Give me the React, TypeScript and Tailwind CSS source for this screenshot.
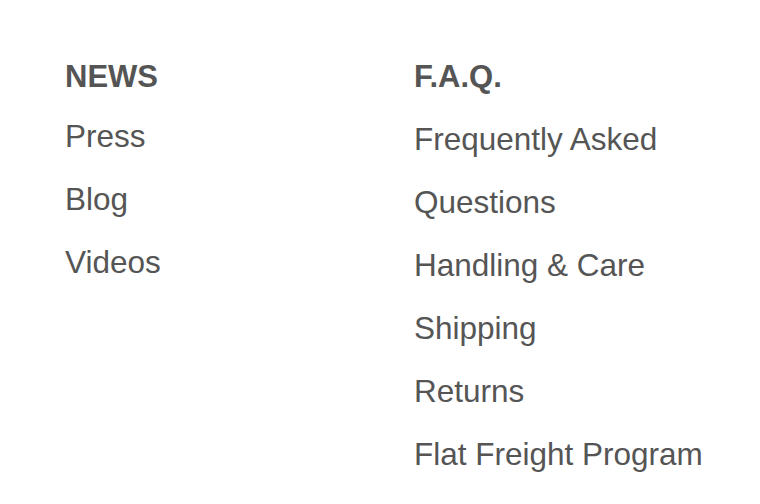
const news = ["Press", "Blog", "Videos"];
const faq = [
  "Frequently Asked",
  "Questions",
  "Handling & Care",
  "Shipping",
  "Returns",
  "Flat Freight Program",
];

function Column({
  title,
  items,
  className,
  listClass,
}: {
  title: string;
  items: string[];
  className: string;
  listClass: string;
}) {
  return (
    <div className={className}>
      <h3 className="text-[31px] leading-[36px] font-bold">{title}</h3>
      <ul className={listClass}>
        {items.map((item) => (
          <li key={item} className="text-[31.5px] leading-[63px]">
            <a href="#">{item}</a>
          </li>
        ))}
      </ul>
    </div>
  );
}

export default function App() {
  return (
    <div
      className="flex h-[504px] w-[760px] bg-white pt-[59px] pl-[65px] text-[#555555]"
      style={{ fontFamily: '"Liberation Sans", Arial, sans-serif' }}
    >
      <Column title="NEWS" items={news} className="w-[349px]" listClass="mt-[10px]" />
      <Column title="F.A.Q." items={faq} className="flex-1" listClass="mt-[13px]" />
    </div>
  );
}
